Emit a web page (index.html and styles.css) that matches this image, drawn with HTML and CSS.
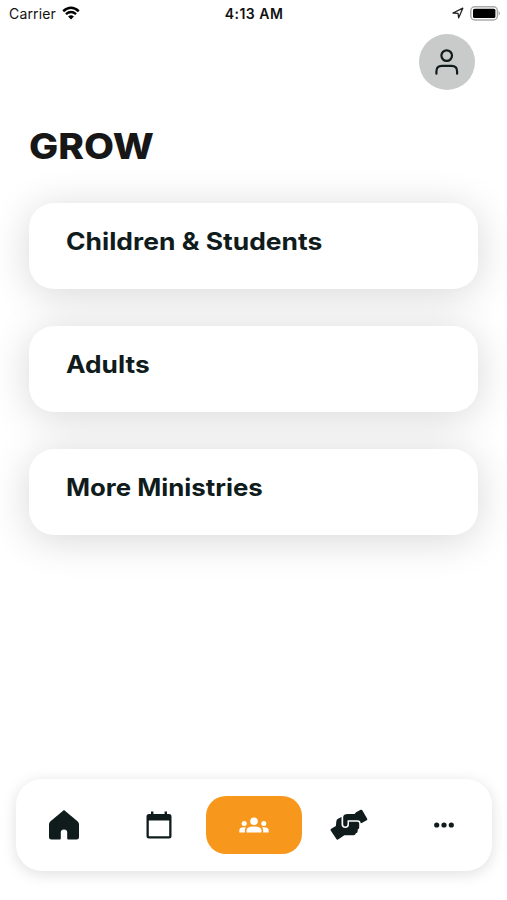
FILE: index.html
```html
<!DOCTYPE html>
<html lang="en">
<head>
    <meta charset="UTF-8">
    <meta name="viewport" content="width=device-width, initial-scale=1.0">
    <title>Grow</title>
    <link rel="stylesheet" href="styles.css">
</head>
<body>
    <div class="status-bar">
        <div class="carrier">
            <span>Carrier</span>
            <svg class="wifi" viewBox="0 0 18 14" width="18" height="14">
                <path d="M1.2 5.2Q9 -1.6 16.8 5.2" fill="none" stroke="#000" stroke-width="2.5"/>
                <path d="M3.9 8.2Q9 3.9 14.1 8.2" fill="none" stroke="#000" stroke-width="2.3"/>
                <path d="M6.1 10.5Q9 8 11.9 10.5L9 13.6Z"/>
            </svg>
        </div>
        <div class="time">4:13 AM</div>
        <div class="device">
            <svg viewBox="0 0 12 12" width="12" height="12">
                <path d="M1 6L10.8 1.2L6.7 10.8L6 6.3Z" fill="none" stroke="#222" stroke-width="1.3" stroke-linejoin="round"/>
            </svg>
            <svg viewBox="0 0 31 15" width="31" height="15">
                <rect x="0.8" y="0.8" width="26.6" height="13.2" rx="4" fill="#fff" stroke="#aaa" stroke-width="1.5"/>
                <rect x="3" y="2.7" width="22.4" height="9.4" rx="1.6"/>
                <path d="M28.6 5Q31.4 7.3 28.6 9.6Z" fill="#aaa"/>
            </svg>
        </div>
    </div>

    <header class="header">
        <div class="avatar">
            <svg viewBox="0 0 26 28" width="26" height="28">
                <circle cx="12.7" cy="7.6" r="5.3"/>
                <path d="M2.4 25.7V23.4Q2.4 17.9 7.9 17.9H17.6Q23.1 17.9 23.1 23.4V25.7"/>
            </svg>
        </div>
    </header>

    <main class="content">
        <h1><span>GROW</span></h1>
        <div class="card"><span class="children">Children &amp; Students</span></div>
        <div class="card"><span class="adults">Adults</span></div>
        <div class="card"><span class="more">More Ministries</span></div>
    </main>

    <nav class="tabs">
        <a class="tab">
            <svg viewBox="0 0 32 32" width="32" height="32">
                <path d="M16 1L29.5 12.2Q31 13.5 31 15.3V28Q31 30.5 28.5 30.5H20.2Q19.2 30.5 19.2 29.5V23.5Q19.2 20.6 16 20.6T12.8 23.5V29.5Q12.8 30.5 11.8 30.5H3.5Q1 30.5 1 28V15.3Q1 13.5 2.5 12.2Z"/>
            </svg>
        </a>
        <a class="tab">
            <svg viewBox="0 0 26 28" width="26" height="28">
                <path fill-rule="evenodd" d="M5 0.5H7.4V3H18.6V0.5H21V3H23Q25.5 3 25.5 5.5V25Q25.5 27.5 23 27.5H3Q0.5 27.5 0.5 25V5.5Q0.5 3 3 3H5ZM2.8 9.4V25.3H23.2V9.4Z"/>
            </svg>
        </a>
        <a class="tab active">
            <svg viewBox="0 0 30 16" width="30" height="16">
                <circle cx="15" cy="4.2" r="3.8"/>
                <circle cx="5.2" cy="6.4" r="2.5"/>
                <circle cx="24.8" cy="6.4" r="2.5"/>
                <path d="M7.5 15.5V13.4Q7.5 9.6 15 9.6T22.5 13.4V15.5Z"/>
                <path d="M0.3 15.5V13.5Q0.3 10.3 5.2 10.3H7Q5.9 11.5 5.9 13.2V15.5Z"/>
                <path d="M29.7 15.5V13.5Q29.7 10.3 24.8 10.3H23Q24.1 11.5 24.1 13.2V15.5Z"/>
            </svg>
        </a>
        <a class="tab">
            <svg viewBox="0 0 38 32" width="38" height="32">
                <path d="M0.7 21.5Q0.1 20.4 1.2 19.8L5.9 17.1L6.3 12.4Q6.5 10.5 8 9.7L11.5 8V15.3Q11.6 19.1 15.3 19.1T19 15.3V12.7H27.5Q29.2 12.7 29.2 14.5V18.5Q29.2 20.1 27.7 20.4V22.2Q27.5 24 25.8 24.2Q25.5 26.3 23.5 26.3H14.4L8 30.4Q7 31 6.4 30Z"/>
                <path d="M13.2 8Q13.3 5.2 17.8 5.1H24.5L26.1 3.2L30.7 0.8Q31.7 0.3 32.3 1.3L37.2 9.7Q37.7 10.7 36.7 11.3L31.8 14.1L30.7 14.2Q30.5 11.2 27.8 11.2H17.5V15.3Q17.4 17.5 15.3 17.5T13.2 15.3Z"/>
            </svg>
        </a>
        <a class="tab">
            <svg viewBox="0 0 20 6" width="20" height="6">
                <circle cx="2.7" cy="3" r="2.6"/>
                <circle cx="10" cy="3" r="2.6"/>
                <circle cx="17.3" cy="3" r="2.6"/>
            </svg>
        </a>
    </nav>
</body>
</html>
```

FILE: styles.css
```css
* {
    margin: 0;
    padding: 0;
    box-sizing: border-box;
}

:root {
    --dark: #101c1c;
    --orange: #f7981d;
}

body {
    height: 900px;
    background-color: #fff;
    font-family: Inter, sans-serif;
    color: var(--dark);
    display: flex;
    flex-direction: column;
    overflow: hidden;
}

svg {
    display: block;
}

.status-bar {
    height: 28px;
    padding: 0 6px 2px 9px;
    display: grid;
    grid-template-columns: 1fr auto 1fr;
    align-items: center;
    font-size: 14px;
    color: #111;
}

.carrier {
    display: flex;
    align-items: center;
    gap: 6px;
    letter-spacing: 0.15px;
}

.time {
    font-weight: 600;
    letter-spacing: 0.5px;
    margin-right: 2px;
}

.device {
    display: flex;
    justify-content: flex-end;
    align-items: center;
    gap: 6px;
}

.header {
    display: flex;
    justify-content: flex-end;
    padding: 6px 32px 0 0;
}

.avatar {
    width: 56px;
    height: 56px;
    border-radius: 50%;
    background-color: #c9cbca;
    display: flex;
    align-items: center;
    justify-content: center;
}

.avatar svg {
    fill: none;
    stroke: #101c1c;
    stroke-width: 2.2;
    stroke-linecap: round;
}

.content {
    padding: 35px 29px 0;
    flex: 1;
}

h1 {
    height: 42px;
    margin-bottom: 36px;
    font-size: 35px;
    line-height: 42px;
    font-weight: 800;
    color: #171717;
}

h1 span,
.card span {
    display: inline-block;
    transform-origin: left;
    white-space: nowrap;
}

h1 span {
    transform: scaleX(1.11);
}

.card {
    height: 86px;
    margin-bottom: 37px;
    padding: 23px 37px;
    border-radius: 25px;
    background-color: #fff;
    box-shadow: 0 5px 40px rgba(0, 0, 0, 0.16);
    font-size: 24px;
    line-height: 32px;
    font-weight: 700;
    position: relative;
}

.card .children {
    transform: scaleX(1.102);
}

.card .adults {
    transform: scaleX(1.095);
}

.card .more {
    transform: scaleX(1.075);
}

.tabs {
    height: 92px;
    margin: 0 15px 29px 16px;
    border-radius: 26px;
    background-color: #fff;
    box-shadow: 0 3px 15px rgba(0, 0, 0, 0.13);
    display: flex;
    align-items: center;
}

.tab {
    flex: 1;
    height: 58px;
    display: flex;
    align-items: center;
    justify-content: center;
    fill: var(--dark);
}

.tab.active {
    border-radius: 20px;
    background-color: var(--orange);
    fill: #fff;
}
```
